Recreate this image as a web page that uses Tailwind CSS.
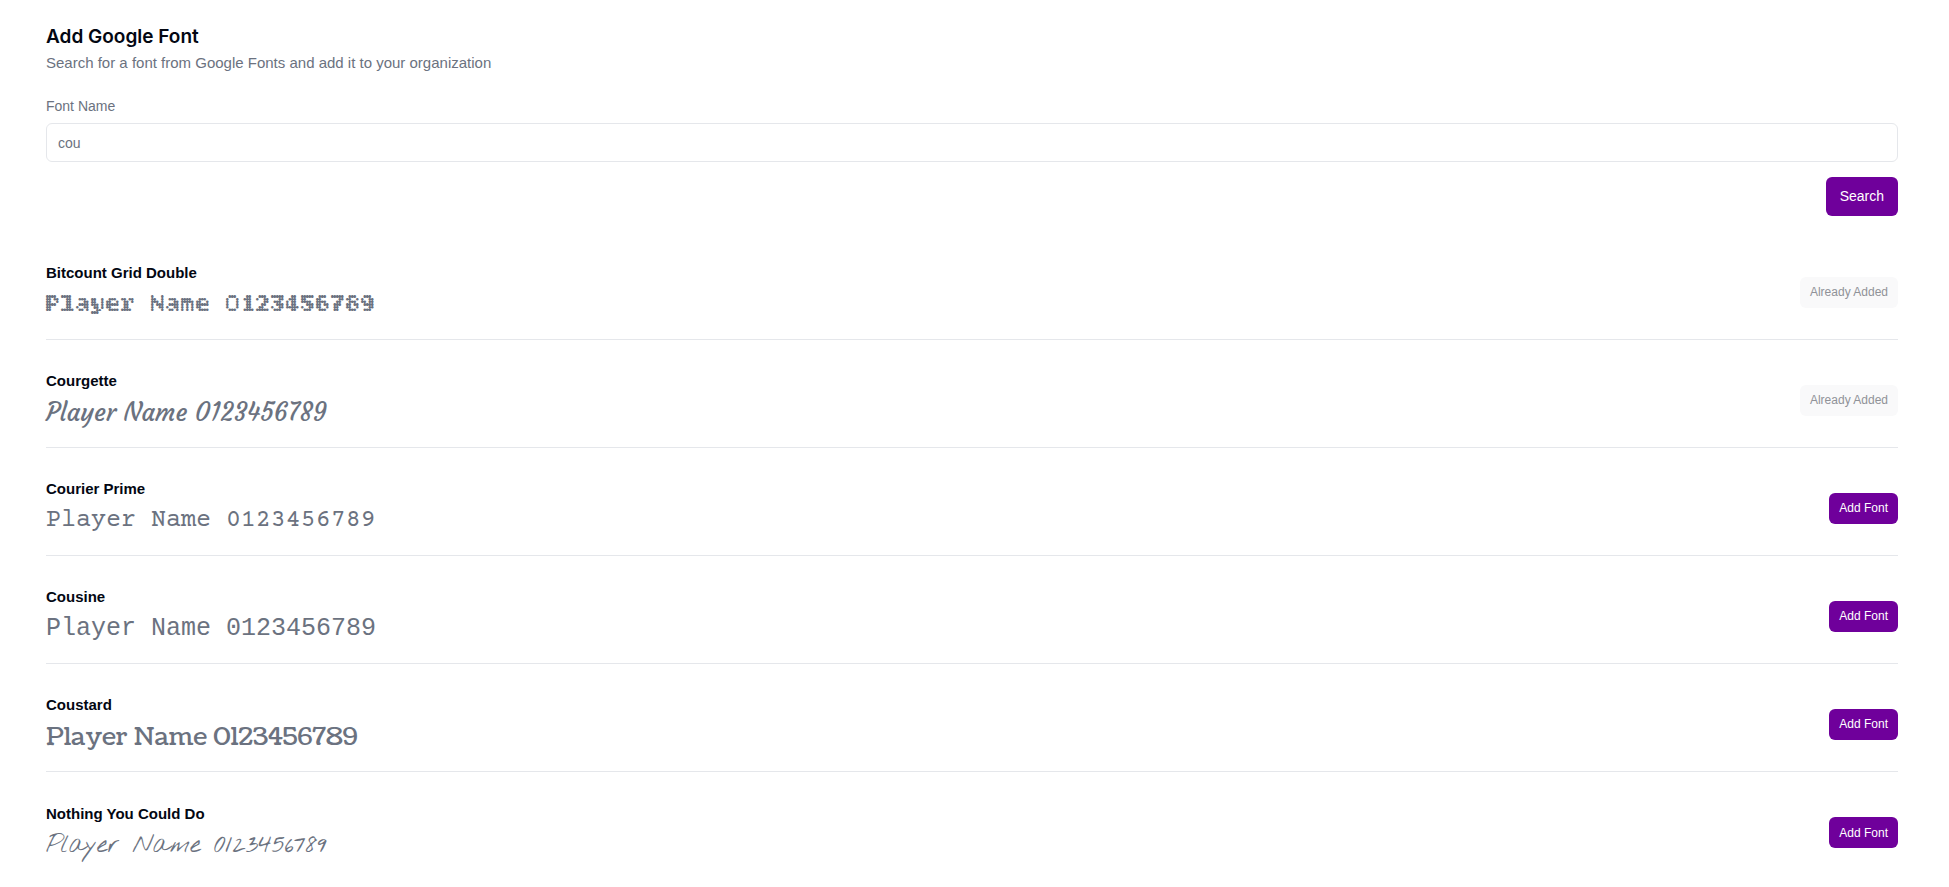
<!DOCTYPE html>
<html lang="en">
<head>
    <meta charset="UTF-8">
    <meta name="viewport" content="width=device-width, initial-scale=1.0">
    <title>Add Google Font</title>
    <script src="https://cdn.jsdelivr.net/npm/@tailwindcss/browser@4"></script>
</head>
<body class="bg-white text-[#6b7280] font-['Liberation_Sans',Arial,sans-serif]">
    <main class="pl-[46px] pr-[51px] pt-[25px]">
        <header>
            <h1 class="text-[19px] leading-6 font-semibold text-[#030712] font-[Inter,sans-serif]">Add Google Font</h1>
            <p class="text-[15px] leading-7">Search for a font from Google Fonts and add it to your organization</p>
        </header>

        <form class="mt-[19px]">
            <label for="font-name" class="block text-[14px] leading-5">Font Name</label>
            <input id="font-name" type="text" value="cou" class="mt-[7px] block h-[39px] w-full rounded-md border border-[#e5e7eb] px-[11px] text-[14px]">
            <div class="mt-[15px] flex justify-end">
                <button type="submit" class="h-[39px] rounded-md bg-[#6f009b] px-[14px] text-[14px] text-white">Search</button>
            </div>
        </form>

        <!-- Search results -->
        <ul class="mt-4 divide-y divide-[#e5e7eb]">
            <li class="flex h-[108px] items-center justify-between pt-[13px]">
                <div>
                    <h2 class="mb-[2px] text-[15px] leading-6 font-bold text-[#030712]">Bitcount Grid Double</h2>
                    <p class="h-9 text-[25px] leading-9 font-['Bitcount_Grid_Double','Liberation_Mono',monospace]">Player Name 0123456789</p>
                </div>
                <button type="button" disabled class="h-[31px] rounded-md bg-[#f9f9fa] px-[10px] text-[12px] text-[#909298]">Already Added</button>
            </li>
            <li class="flex h-[108px] items-center justify-between pt-[13px]">
                <div>
                    <h2 class="mb-[2px] text-[15px] leading-6 font-bold text-[#030712]">Courgette</h2>
                    <p class="h-9 text-[25px] leading-9 font-[Courgette,Lato,sans-serif]">Player Name 0123456789</p>
                </div>
                <button type="button" disabled class="h-[31px] rounded-md bg-[#f9f9fa] px-[10px] text-[12px] text-[#909298]">Already Added</button>
            </li>
            <li class="flex h-[108px] items-center justify-between pt-[13px]">
                <div>
                    <h2 class="mb-[2px] text-[15px] leading-6 font-bold text-[#030712]">Courier Prime</h2>
                    <p class="h-9 text-[25px] leading-9 font-['Courier_Prime','Liberation_Mono',monospace]">Player Name 0123456789</p>
                </div>
                <button type="button" class="h-[31px] rounded-md bg-[#6f009b] px-[10px] text-[12px] text-white">Add Font</button>
            </li>
            <li class="flex h-[108px] items-center justify-between pt-[13px]">
                <div>
                    <h2 class="mb-[2px] text-[15px] leading-6 font-bold text-[#030712]">Cousine</h2>
                    <p class="h-9 text-[25px] leading-9 font-[Cousine,'Liberation_Mono',monospace]">Player Name 0123456789</p>
                </div>
                <button type="button" class="h-[31px] rounded-md bg-[#6f009b] px-[10px] text-[12px] text-white">Add Font</button>
            </li>
            <li class="flex h-[108px] items-center justify-between pt-[13px]">
                <div>
                    <h2 class="mb-[2px] text-[15px] leading-6 font-bold text-[#030712]">Coustard</h2>
                    <p class="h-9 text-[25px] leading-9 font-[Coustard,'DejaVu_Serif',serif]">Player Name 0123456789</p>
                </div>
                <button type="button" class="h-[31px] rounded-md bg-[#6f009b] px-[10px] text-[12px] text-white">Add Font</button>
            </li>
            <li class="flex h-[108px] items-center justify-between pt-[13px]">
                <div>
                    <h2 class="mb-[2px] text-[15px] leading-6 font-bold text-[#030712]">Nothing You Could Do</h2>
                    <p class="h-9 text-[25px] leading-9 font-['Nothing_You_Could_Do',Lato,cursive]">Player Name 0123456789</p>
                </div>
                <button type="button" class="h-[31px] rounded-md bg-[#6f009b] px-[10px] text-[12px] text-white">Add Font</button>
            </li>
        </ul>
    </main>
</body>
</html>
